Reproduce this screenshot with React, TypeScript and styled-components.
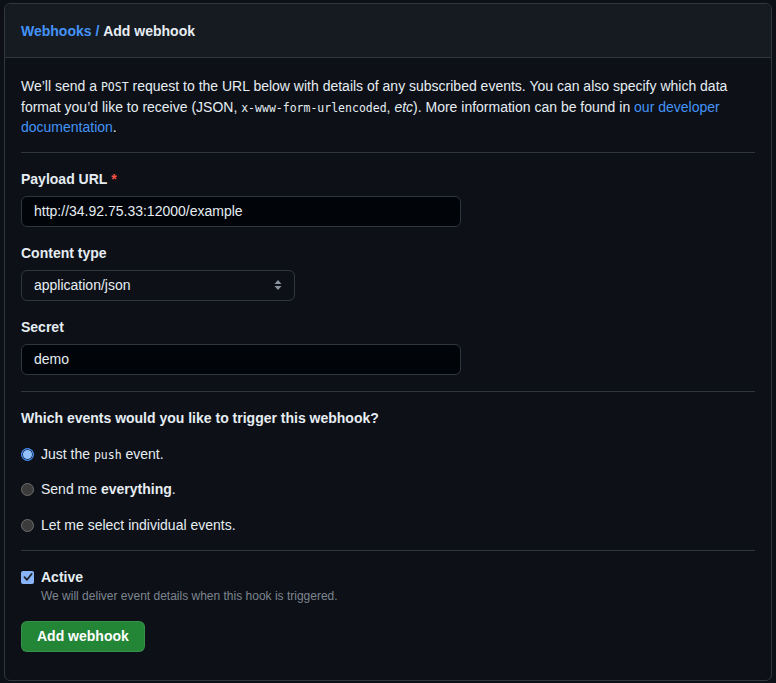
import React from "react";
import styled, { createGlobalStyle } from "styled-components";

const colors = {
  BG: "#0d1117",
  HEADER: "#161b22",
  INPUT: "#010409",
  BORDER: "#30363d",
  TEXT: "#e6edf3",
  MUTED: "#7d8590",
  BLUE: "#4493f8",
  RED: "#f85149",
  GREEN: "#238636",
};

const GlobalStyle = createGlobalStyle`
  html, body {
    margin: 0;
    background: ${colors.BG};
  }
  body {
    padding: 3px 4px 4px 4px;
    font-family: -apple-system, "Liberation Sans", Arial, sans-serif;
    font-size: 14px;
    color: ${colors.TEXT};
  }
`;

const Panel = styled.div`
  border: 1px solid ${colors.BORDER};
  border-radius: 6px;
  background: ${colors.BG};
  overflow: hidden;
`;

const Header = styled.div`
  background: ${colors.HEADER};
  border-bottom: 1px solid ${colors.BORDER};
  height: 53px;
  padding: 0 16px;
  display: flex;
  align-items: center;
  font-weight: 700;
  font-size: 14px;
`;

const Crumb = styled.a`
  color: ${colors.BLUE};
  text-decoration: none;
`;

const Body = styled.div`
  padding: 18px 16px 28px 16px;
`;

const Intro = styled.p`
  margin: 0;
  line-height: 20.5px;
`;

const Link = styled.a`
  color: ${colors.BLUE};
  text-decoration: none;
`;

const Code = styled.code`
  font-family: "DejaVu Sans Mono", "Liberation Mono", monospace;
  font-size: 11.5px;
  line-height: 1;
`;

const Divider = styled.hr<{ $top: number }>`
  border: none;
  border-top: 1px solid ${colors.BORDER};
  margin: ${({ $top }) => $top}px 0 16px 0;
`;

const Field = styled.div`
  display: flex;
  flex-direction: column;
  gap: 6px;
  & + & {
    margin-top: 16px;
  }
`;

const Label = styled.label`
  font-weight: 700;
  line-height: 21px;
`;

const Required = styled.span`
  color: ${colors.RED};
  margin-left: 4px;
`;

const TextInput = styled.div<{ $width: number; $dark?: boolean }>`
  box-sizing: border-box;
  width: ${({ $width }) => $width}px;
  height: 31px;
  border: 1px solid ${colors.BORDER};
  border-radius: 6px;
  background: ${({ $dark }) => ($dark ? colors.INPUT : colors.BG)};
  padding: 0 12px;
  display: flex;
  align-items: center;
  justify-content: space-between;
  font-size: 14px;
`;

const Question = styled.div`
  font-weight: 700;
  line-height: 21px;
  margin-bottom: 15px;
`;

const RadioList = styled.div`
  display: flex;
  flex-direction: column;
  gap: 14.5px;
`;

const RadioRow = styled.div`
  display: flex;
  align-items: center;
  gap: 7px;
  line-height: 21px;
`;

const RadioDot = styled.span<{ $checked?: boolean }>`
  box-sizing: border-box;
  width: 13px;
  height: 13px;
  border-radius: 50%;
  flex-shrink: 0;
  background: ${({ $checked }) => ($checked ? "#92c1ff" : "#3b3b3b")};
  border: 1px solid ${({ $checked }) => ($checked ? "#3d8bfd" : "#6e6e6e")};
  box-shadow: ${({ $checked }) => ($checked ? "inset 0 0 0 1px #1d3556" : "none")};
`;

const CheckRow = styled.div`
  display: flex;
  align-items: center;
  gap: 7px;
  font-weight: 700;
  line-height: 21px;
`;

const CheckBox = styled.span`
  width: 13px;
  height: 13px;
  border-radius: 2px;
  background: #8ab4f8;
  display: flex;
  align-items: center;
  justify-content: center;
  flex-shrink: 0;
`;

const Hint = styled.div`
  color: ${colors.MUTED};
  font-size: 12px;
  margin-left: 20px;
  line-height: 16px;
`;

const Button = styled.button`
  margin-top: 17px;
  height: 31px;
  padding: 0 15px;
  border-radius: 6px;
  border: 1px solid rgba(240, 246, 252, 0.1);
  background: ${colors.GREEN};
  color: #ffffff;
  font-family: inherit;
  font-size: 14px;
  font-weight: 700;
`;

const SelectArrows = () => (
  <svg width="8" height="12" viewBox="0 0 8 12">
    <path d="M4 1 L7.5 5 H0.5 Z" fill="#8b949e" />
    <path d="M4 11 L7.5 7 H0.5 Z" fill="#8b949e" />
  </svg>
);

export default function App() {
  return (
    <>
      <GlobalStyle />
      <Panel>
        <Header>
          <Crumb>Webhooks /</Crumb>&nbsp;Add webhook
        </Header>
        <Body>
          <Intro>
            We’ll send a <Code>POST</Code> request to the URL below with details of any
            subscribed events. You can also specify which data format you’d like to receive
            (JSON, <Code>x-www-form-urlencoded</Code>, <em>etc</em>). More information can be
            found in <Link>our developer documentation</Link>.
          </Intro>
          <Divider $top={14} />

          <Field>
            <Label>
              Payload URL<Required>*</Required>
            </Label>
            <TextInput $width={440} $dark>
              http://34.92.75.33:12000/example
            </TextInput>
          </Field>
          <Field>
            <Label>Content type</Label>
            <TextInput $width={274}>
              application/json
              <SelectArrows />
            </TextInput>
          </Field>
          <Field>
            <Label>Secret</Label>
            <TextInput $width={440} $dark>
              demo
            </TextInput>
          </Field>
          <Divider $top={16} />

          <Question>Which events would you like to trigger this webhook?</Question>
          <RadioList>
            <RadioRow>
              <RadioDot $checked />
              <span>
                Just the <Code>push</Code> event.
              </span>
            </RadioRow>
            <RadioRow>
              <RadioDot />
              <span>
                Send me <b>everything</b>.
              </span>
            </RadioRow>
            <RadioRow>
              <RadioDot />
              <span>Let me select individual events.</span>
            </RadioRow>
          </RadioList>
          <Divider $top={14} />

          <CheckRow>
            <CheckBox>
              <svg width="10" height="10" viewBox="0 0 10 10">
                <path
                  d="M1.5 5.2 L4 7.8 L8.6 2"
                  stroke="#1c2128"
                  strokeWidth="1.8"
                  fill="none"
                  strokeLinecap="round"
                  strokeLinejoin="round"
                />
              </svg>
            </CheckBox>
            Active
          </CheckRow>
          <Hint>We will deliver event details when this hook is triggered.</Hint>
          <Button>Add webhook</Button>
        </Body>
      </Panel>
    </>
  );
}
